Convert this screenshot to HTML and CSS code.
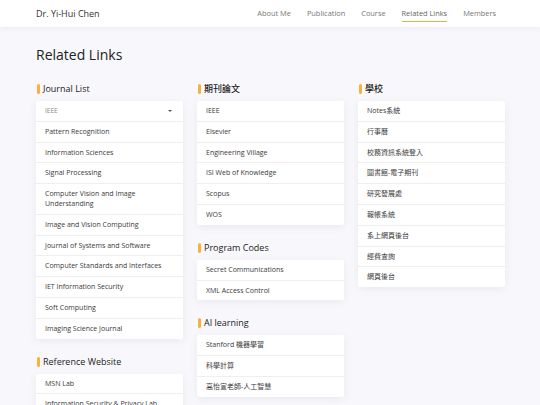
FILE: index.html
```html
<!DOCTYPE html>
<html>
<head>
  <title>Related Links - Dr. Yi-Hui Chen</title>
  <link rel="stylesheet" href="styles.css">
</head>
<body>
  <header class="topbar">
    <div class="brand">Dr. Yi-Hui Chen</div>
    <nav class="menu">
      <a href="#">About Me</a>
      <a href="#">Publication</a>
      <a href="#">Course</a>
      <a href="#" class="active">Related Links</a>
      <a href="#">Members</a>
    </nav>
  </header>

  <main class="page">
    <h1>Related Links</h1>

    <div class="columns">
      <div class="column">
        <section class="group">
          <h3 class="group-title">Journal List</h3>
          <div class="card">
            <div class="picker">
              <span>IEEE</span>
              <span class="caret"></span>
            </div>
            <a class="row" href="#">Pattern Recognition</a>
            <a class="row" href="#">Information Sciences</a>
            <a class="row" href="#">Signal Processing</a>
            <a class="row" href="#">Computer Vision and Image Understanding</a>
            <a class="row" href="#">Image and Vision Computing</a>
            <a class="row" href="#">Journal of Systems and Software</a>
            <a class="row" href="#">Computer Standards and Interfaces</a>
            <a class="row" href="#">IET Information Security</a>
            <a class="row" href="#">Soft Computing</a>
            <a class="row" href="#">Imaging Science Journal</a>
          </div>
        </section>
        <section class="group">
          <h3 class="group-title">Reference Website</h3>
          <div class="card">
            <a class="row" href="#">MSN Lab</a>
            <a class="row" href="#">Information Security &amp; Privacy Lab</a>
          </div>
        </section>
      </div>

      <div class="column">
        <section class="group">
          <h3 class="group-title">期刊論文</h3>
          <div class="card">
            <a class="row" href="#">IEEE</a>
            <a class="row" href="#">Elsevier</a>
            <a class="row" href="#">Engineering Village</a>
            <a class="row" href="#">ISI Web of Knowledge</a>
            <a class="row" href="#">Scopus</a>
            <a class="row" href="#">WOS</a>
          </div>
        </section>
        <section class="group">
          <h3 class="group-title">Program Codes</h3>
          <div class="card">
            <a class="row" href="#">Secret Communications</a>
            <a class="row" href="#">XML Access Control</a>
          </div>
        </section>
        <section class="group">
          <h3 class="group-title">AI learning</h3>
          <div class="card">
            <a class="row" href="#">Stanford 機器學習</a>
            <a class="row" href="#">科學計算</a>
            <a class="row" href="#">高怡宣老師-人工智慧</a>
          </div>
        </section>
      </div>

      <div class="column">
        <section class="group">
          <h3 class="group-title">學校</h3>
          <div class="card">
            <a class="row" href="#">Notes系統</a>
            <a class="row" href="#">行事曆</a>
            <a class="row" href="#">校務資訊系統登入</a>
            <a class="row" href="#">圖書館-電子期刊</a>
            <a class="row" href="#">研究發展處</a>
            <a class="row" href="#">報帳系統</a>
            <a class="row" href="#">系上網頁後台</a>
            <a class="row" href="#">經費查詢</a>
            <a class="row" href="#">網頁後台</a>
          </div>
        </section>
      </div>
    </div>
  </main>
</body>
</html>
```

FILE: styles.css
```css
body {
  margin: 0;
  background-color: #f8f8fc;
  font-family: "Open Sans", "Noto Sans CJK TC", sans-serif;
  color: #333;
}

.topbar {
  height: 27px;
  padding: 0 36px;
  display: flex;
  align-items: center;
  justify-content: space-between;
  background-color: #fff;
  box-shadow: 0 1px 6px rgba(0, 0, 0, 0.06);
}

.brand {
  font-size: 9px;
  color: #333;
}

.menu {
  display: flex;
  gap: 16px;
  margin-right: 8px;
}

.menu a {
  font-size: 7.4px;
  color: #777;
  text-decoration: none;
  padding: 3px 0;
  border-bottom: 1px solid transparent;
}

.menu a.active {
  color: #666;
  border-bottom-color: #f0ad4e;
}

.page {
  padding: 18px 36px 0;
}

h1 {
  margin: 0 0 18px;
  font-size: 14px;
  line-height: 20px;
  font-weight: 500;
  color: #222;
}

.columns {
  display: grid;
  grid-template-columns: 147px 147px 147px;
  gap: 14px;
  align-items: start;
}

.group {
  margin-bottom: 17px;
}

.group-title {
  display: flex;
  align-items: center;
  gap: 3px;
  margin: 0 0 6px 1px;
  font-size: 9px;
  line-height: 12px;
  font-weight: 500;
  color: #222;
}

.group-title::before {
  content: "";
  width: 3px;
  height: 10px;
  border-radius: 2px;
  background-color: #f7b13c;
}

.card {
  background-color: #fff;
  border-radius: 2px;
  box-shadow: 0 2px 8px rgba(40, 40, 90, 0.08);
}

.row,
.picker {
  display: block;
  padding: 5px 9px;
  font-size: 7px;
  line-height: 9.8px;
  color: #3a3a3a;
  text-decoration: none;
  border-bottom: 1px solid #eee;
}

.row:last-child {
  border-bottom: none;
}

.picker {
  display: flex;
  justify-content: space-between;
  align-items: center;
  color: #888;
  font-size: 6.5px;
}

.caret {
  width: 0;
  height: 0;
  margin-right: 2px;
  border-left: 2px solid transparent;
  border-right: 2px solid transparent;
  border-top: 2px solid #555;
}
```
